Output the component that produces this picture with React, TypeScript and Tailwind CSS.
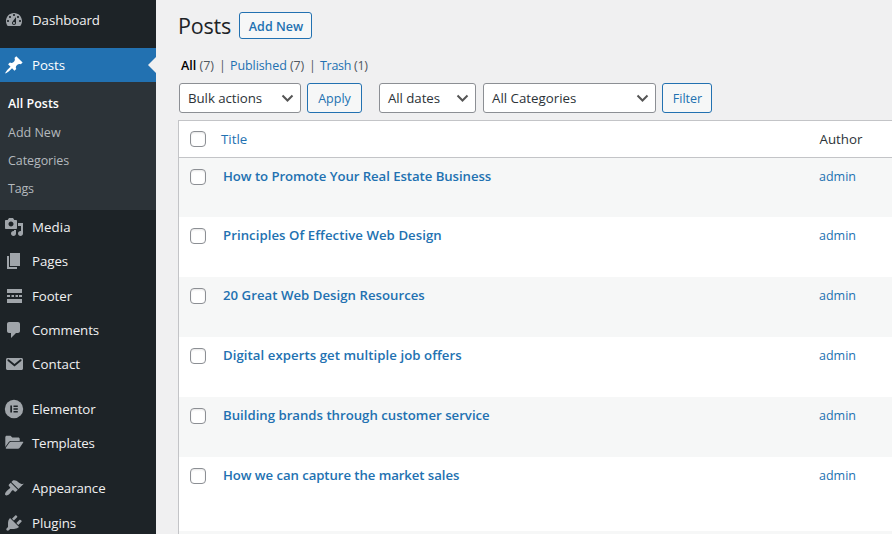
import type { ReactNode } from "react";

type IconProps = { children: ReactNode; className?: string };

function Icon({ children, className = "" }: IconProps) {
  return (
    <svg viewBox="0 0 20 20" className={`size-5 shrink-0 fill-current ${className}`}>
      {children}
    </svg>
  );
}

const icons = {
  dashboard: (
    <path
      fillRule="evenodd"
      d="M3.76 16h12.48c1.1-1.37 1.76-3.11 1.76-5 0-4.42-3.58-8-8-8s-8 3.58-8 8c0 1.89.66 3.63 1.76 5zM10 4c.55 0 1 .45 1 1s-.45 1-1 1-1-.45-1-1 .45-1 1-1zM6 6c.55 0 1 .45 1 1s-.45 1-1 1-1-.45-1-1 .45-1 1-1zm8 0c.55 0 1 .45 1 1s-.45 1-1 1-1-.45-1-1 .45-1 1-1zm-5.37 5.55L12 7v6c0 1.1-.9 2-2 2s-2-.9-2-2c0-.57.24-1.08.63-1.45zM4 10c.55 0 1 .45 1 1s-.45 1-1 1-1-.45-1-1 .45-1 1-1zm12 0c.55 0 1 .45 1 1s-.45 1-1 1-1-.45-1-1 .45-1 1-1zm-5 3c0-.55-.45-1-1-1s-1 .45-1 1 .45 1 1 1 1-.45 1-1z"
    />
  ),
  pin: (
    <path d="M10.44 3.02l1.82-1.82 6.36 6.35-1.83 1.82c-1.05-.68-2.48-.57-3.41.36l-.75.75c-.92.93-1.04 2.35-.35 3.41l-1.83 1.82-2.41-2.41-2.8 2.79c-.42.42-3.38 2.71-3.8 2.29s1.86-3.39 2.28-3.81l2.79-2.79L4.1 9.36l1.83-1.82c1.05.69 2.48.57 3.4-.36l.75-.75c.93-.92 1.05-2.35.36-3.41z" />
  ),
  media: (
    <path
      fillRule="evenodd"
      d="M13 11V4c0-.55-.45-1-1-1h-1.67L9 1H5L3.67 3H2c-.55 0-1 .45-1 1v7c0 .55.45 1 1 1h10c.55 0 1-.45 1-1zM7 4.5c1.38 0 2.5 1.12 2.5 2.5S8.38 9.5 7 9.5 4.5 8.38 4.5 7 5.62 4.5 7 4.5zM14 6h5v10.5c0 1.38-1.12 2.5-2.5 2.5S14 17.88 14 16.5s1.12-2.5 2.5-2.5c.17 0 .34.02.5.05V9h-3V6zm-4 8.05V13h2v3.5c0 1.38-1.12 2.5-2.5 2.5S7 17.88 7 16.5 8.12 14 9.5 14c.17 0 .34.02.5.05z"
    />
  ),
  pages: <path d="M6 15V2h10v13H6zm-1 1h8v2H3V5h2v11z" />,
  footer: (
    <path d="M3 3h15v4H3V3zM3 9h3v2H3V9zm4.500 0h2.500v2H7.500V9zm4 0h2.500v2h-2.500V9zm3.500 0h3v2h-3V9zM3 13h15v4H3v-4z" />
  ),
  comments: (
    <path d="M5 2h9c1.1 0 2 .9 2 2v7c0 1.1-.9 2-2 2h-2l-5 5v-5H5c-1.1 0-2-.9-2-2V4c0-1.1.9-2 2-2z" />
  ),
  contact: (
    <>
      <path d="M3.5 4h14c.8 0 1.5.7 1.5 1.500v9c0 .8-.7 1.500-1.500 1.500h-14c-.8 0-1.500-.7-1.500-1.500v-9C2 4.700 2.700 4 3.500 4z" />
      <path d="M4.400 6.200l6.100 5 6.100-5" fill="none" stroke="#1d2327" strokeWidth="1.900" strokeLinecap="round" />
    </>
  ),
  elementor: (
    <>
      <circle cx="10" cy="10" r="9.200" />
      <path d="M6.300 6.500h1.700v7H6.300zM9.500 6.500h4.300v1.400H9.500zM9.500 9.300h4.300v1.400H9.500zM9.500 12.100h4.300v1.400H9.500z" fill="#1d2327" />
    </>
  ),
  templates: (
    <>
      <path d="M1.300 14V4.400C1.300 3.500 1.900 2.800 2.800 2.800h3.700L8.300 4.600h6c.8 0 1.400.6 1.400 1.400v1.900H7.200c-1.100 0-2 .5-2.600 1.400z" />
      <path d="M7.300 8.700h11.400c.5 0 .8.500.5.900l-3.300 4.900c-.5.800-1.300 1.200-2.200 1.200H2.300c-.5 0-.8-.500-.5-.9l3.300-4.900c.5-.8 1.300-1.200 2.200-1.200z" />
    </>
  ),
  appearance: (
    <path d="M14.480 11.060L7.410 3.990l1.500-1.500c.5-.56 2.300-.47 3.510.32 1.210.8 1.430 1.280 2.910 2.100 1.180.64 2.450 1.260 4.450.85zm-.71.71L6.700 4.700 4.930 6.470c-.39.39-.39 1.020 0 1.410l1.060 1.060c.39.39.39 1.030 0 1.420-.6.6-1.430 1.110-2.210 1.690-.35.26-.7.53-1.010.84C1.430 14.230.4 16.080 1.400 17.070c.99 1 2.840-.03 4.180-1.360.31-.31.58-.66.85-1.020.57-.78 1.080-1.610 1.690-2.210.39-.39 1.020-.39 1.410 0l1.060 1.060c.39.39 1.020.39 1.410 0z" />
  ),
  plugins: (
    <path d="M13.110 4.360L9.870 7.600 8 5.730l3.240-3.240c.35-.34 1.050-.2 1.560.32.52.51.66 1.210.31 1.550zm-8 1.770l.91-1.120 9.010 9.010-1.190.84c-.71.71-2.630 1.160-3.820 1.160H6.140L4.900 17.260c-.59.59-1.540.59-2.120 0-.59-.58-.59-1.530 0-2.120l1.240-1.240v-3.880c0-1.130.4-3.190 1.090-3.890zm7.260 3.970l3.240-3.240c.34-.35 1.040-.21 1.550.31.52.51.66 1.210.31 1.550l-3.240 3.250z" />
  ),
};

function MenuItem({
  icon,
  label,
  height = "h-[34px]",
  tracking = "tracking-[-0.08px]",
}: {
  icon: ReactNode;
  label: string;
  height?: string;
  tracking?: string;
}) {
  return (
    <a className={`flex ${height} shrink-0 items-center gap-2 pl-1 text-[13.3px] leading-[18px] text-[#f0f0f1] ${tracking}`}>
      <Icon className="text-[#a0a5aa]">{icon}</Icon>
      <span>{label}</span>
    </a>
  );
}

function Sidebar() {
  return (
    <nav className="flex w-[156px] shrink-0 flex-col bg-[#1d2327]">
      <div className="flex h-12 shrink-0 flex-col pt-[3px]">
        <MenuItem icon={icons.dashboard} label="Dashboard" />
      </div>
      <a className="relative flex h-[34px] shrink-0 items-center gap-2 bg-[#2271b1] pl-1 text-[13.3px] leading-[18px] tracking-[-0.1px] text-white">
        <Icon>{icons.pin}</Icon>
        <span>Posts</span>
        <span className="absolute top-[9px] right-0 border-y-8 border-r-8 border-y-transparent border-r-[#f0f0f1]" />
      </a>
      <div className="flex h-32 shrink-0 flex-col bg-[#2c3338] pt-2 pl-2 text-[12.5px] leading-[28px] text-[#b4b9be]">
        <a className="h-[29px] font-semibold text-white">All Posts</a>
        <a className="h-7">Add New</a>
        <a className="h-7 tracking-[-0.08px]">Categories</a>
        <a className="h-7 tracking-[-0.2px]">Tags</a>
      </div>
      <MenuItem icon={icons.media} label="Media" tracking="tracking-[0.08px]" />
      <MenuItem icon={icons.pages} label="Pages" tracking="tracking-[-0.05px]" />
      <MenuItem icon={icons.footer} label="Footer" height="h-[35px] pt-px" />
      <MenuItem icon={icons.comments} label="Comments" />
      <MenuItem icon={icons.contact} label="Contact" tracking="tracking-[0.05px]" />
      <div className="h-[11px] shrink-0" />
      <MenuItem icon={icons.elementor} label="Elementor" />
      <MenuItem icon={icons.templates} label="Templates" tracking="tracking-[-0.2px]" />
      <div className="h-[11px] shrink-0" />
      <MenuItem icon={icons.appearance} label="Appearance" />
      <MenuItem icon={icons.plugins} label="Plugins" height="h-[35px] pt-px" />
    </nav>
  );
}

function Select({ label, className }: { label: string; className: string }) {
  return (
    <button className={`flex h-[30px] items-center justify-between rounded-[3px] border border-[#8c8f94] bg-white pr-[6px] pl-2 text-[13.3px] text-[#2c3338] ${className}`}>
      <span className="leading-5">{label}</span>
      <svg viewBox="0 0 14 14" className="size-[14px] fill-none stroke-[#555]" strokeWidth="2">
        <path d="M2.500 4.500l5 5 5-5" />
      </svg>
    </button>
  );
}

function Button({ label, className }: { label: string; className: string }) {
  return (
    <button className={`flex items-center justify-center rounded-[3px] border border-[#2271b1] bg-[#f6f7f7] text-[#2271b1] ${className}`}>
      {label}
    </button>
  );
}

function Checkbox() {
  return (
    <span className="block size-4 shrink-0 rounded-[4px] border border-[#8c8f94] bg-white shadow-[inset_0_1px_2px_rgba(0,0,0,0.1)]" />
  );
}

const posts = [
  { title: "How to Promote Your Real Estate Business", height: "h-[59px]", tracking: "tracking-[-0.06px]" },
  { title: "Principles Of Effective Web Design", height: "h-[60px]", tracking: "tracking-[0.06px]" },
  { title: "20 Great Web Design Resources", height: "h-[60px]", tracking: "tracking-[0.03px]" },
  { title: "Digital experts get multiple job offers", height: "h-[60px]", tracking: "tracking-[0.06px]" },
  { title: "Building brands through customer service", height: "h-[60px]", tracking: "" },
  { title: "How we can capture the market sales", height: "h-[74px]", tracking: "tracking-[-0.07px]" },
];

export default function App() {
  return (
    <div className="flex h-[534px] w-[892px] overflow-hidden bg-[#f0f0f1] font-['Open_Sans','Noto_Sans',sans-serif]">
      <Sidebar />
      <main className="flex min-w-0 flex-1 flex-col pl-[22px]">
        <div className="flex h-[39px] shrink-0 items-end">
          <h1 className="w-[61px] text-[21.5px] leading-[27px] tracking-[-0.2px] whitespace-nowrap text-[#1d2327]">Posts</h1>
          <Button label="Add New" className="h-[27px] w-[73px] pt-[3px] pl-px text-[12.5px] font-semibold" />
        </div>
        <div className="mt-[17px] flex h-5 shrink-0 items-center pl-[3px] text-[12.5px] whitespace-pre text-[#50575e]">
          <span className="w-[38px]"><b className="font-semibold text-black">All</b> (7)</span>
          <span className="w-[11px]">|</span>
          <span className="w-[79px] tracking-[-0.08px]"><a className="text-[#2271b1]">Published</a> (7)</span>
          <span className="w-[11px]">|</span>
          <span className="tracking-[-0.3px]"><a className="text-[#2271b1]">Trash</a> (1)</span>
        </div>
        <div className="mt-[7px] flex h-[30px] shrink-0 pl-px">
          <Select label="Bulk actions" className="w-[122px] tracking-[-0.07px]" />
          <Button label="Apply" className="ml-[6px] w-[55px] pt-[2px] text-[12.5px]" />
          <Select label="All dates" className="ml-[17px] w-[97px] tracking-[-0.07px]" />
          <Select label="All Categories" className="ml-[7px] w-[173px]" />
          <Button label="Filter" className="ml-[6px] w-[50px] pt-[2px] pl-px text-[12.5px]" />
        </div>
        <section className="mt-[7px] flex flex-1 flex-col border-t border-l border-[#c3c4c7] bg-white">
          <header className="flex h-[37px] shrink-0 items-center border-b border-[#c3c4c7] pl-[11px] text-[13.3px] leading-5">
            <Checkbox />
            <span className="ml-[15px] w-[598px] text-[#2271b1]">Title</span>
            <span className="pl-[0.5px] text-[#2c3338]">Author</span>
          </header>
          {posts.map((post) => (
            <div key={post.title} className={`flex ${post.height} shrink-0 items-start pt-[9px] pl-[11px] leading-5 text-[#2271b1] odd:bg-white even:bg-[#f6f7f7]`}>
              <span className="pt-[2px]"><Checkbox /></span>
              <a className={`ml-[17px] -mt-px w-[596px] text-[13.2px] font-semibold whitespace-nowrap ${post.tracking}`}>{post.title}</a>
              <a className="text-[12.5px]">admin</a>
            </div>
          ))}
          <div className="flex-1 bg-[#f6f7f7]" />
        </section>
      </main>
    </div>
  );
}
